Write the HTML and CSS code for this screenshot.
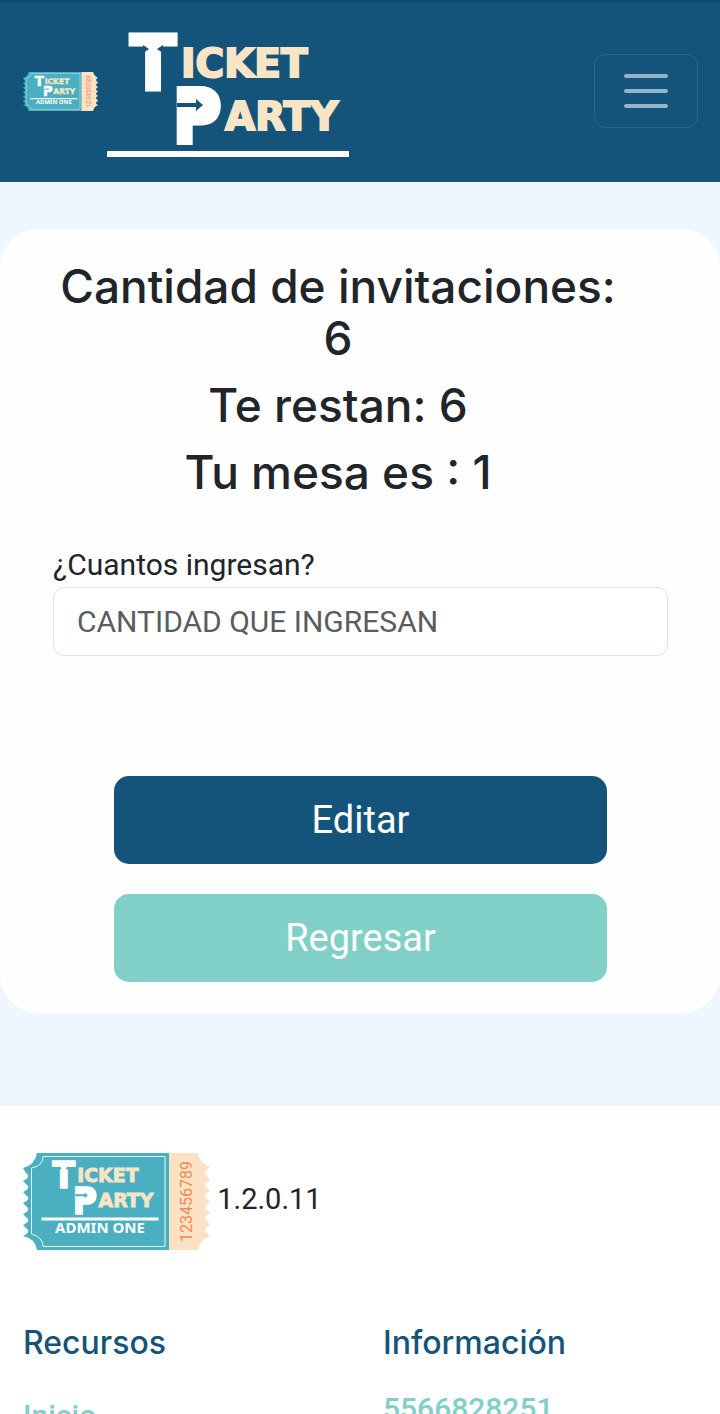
FILE: index.html
```html
<!DOCTYPE html>
<html lang="es">
<head>
<meta charset="utf-8">
<meta name="viewport" content="width=device-width, initial-scale=1">
<title>Ticket Party</title>
<link rel="stylesheet" href="styles.css">
</head>
<body>
<svg class="sprite" aria-hidden="true">
  <symbol id="wordmark" viewBox="0 0 242 126" overflow="visible">
    <g class="logo-big">
      <text x="46" y="58" text-anchor="middle">T</text>
      <text x="65" y="111">P</text>
    </g>
    <path d="M82 62H101V84H82Z" fill="#fff"/>
    <path d="M70 71H89V67L96 73L89 79V75H70ZM36 13L42 17L36 21ZM56 13L50 17L56 21Z" fill="currentColor"/>
    <g class="logo-small">
      <text x="74" y="45">ICKET</text>
      <text x="118" y="98">ARTY</text>
    </g>
    <path d="M0 119H242V125H0Z" fill="#fff"/>
  </symbol>
  <symbol id="ticket" viewBox="0 0 187 97" overflow="visible">
    <path d="M14 0H147V97H14Q12 85 0 83Q9 79 3 75Q1 73 0 72Q9 68 3 64L0 61Q9 57 3 53L0 50Q9 46 3 42L0 39Q9 35 3 31L0 28Q9 24 3 20L0 15Q12 12 14 0Z" fill="#4aafc0"/>
    <path d="M146 0H175Q177 11 187 14Q179 19 184 23L187 27Q179 31 184 35L187 38Q179 42 184 46L187 49Q179 53 184 57L187 60Q179 64 184 68L187 72Q179 76 184 80L187 83Q177 86 175 97H146Z" fill="#fce2c5"/>
    <path d="M20 3.500H142V93.500H20Q20 84 8.500 81V15Q20 13 20 3.500Z" fill="none" stroke="#e8f8fa"/>
    <use href="#wordmark" x="18" y="7" width="118" height="61"/>
    <text class="logo-admin" x="77" y="80" text-anchor="middle">ADMIN ONE</text>
    <text class="logo-number" transform="translate(169 89) rotate(-90)">123456789</text>
  </symbol>
</svg>

<header class="navbar">
  <a class="brand" href="#" aria-label="Ticket Party">
    <svg class="brand-ticket"><use href="#ticket"/></svg>
    <svg class="brand-name" viewBox="0 -8 242 134"><use href="#wordmark" width="242" height="126"/></svg>
  </a>
  <button class="menu-button" type="button" aria-label="Menú">
    <svg class="menu-icon" viewBox="0 0 56 56"><path d="M8 13H48M8 28H48M8 43H48"/></svg>
  </button>
</header>

<main class="main">
  <form class="card">
    <div class="summary">
      <h2>Cantidad de invitaciones: 6</h2>
      <h2>Te restan: 6</h2>
      <h2>Tu mesa es : 1</h2>
    </div>
    <label class="label" for="cantidad">¿Cuantos ingresan?</label>
    <input class="input" id="cantidad" type="text" placeholder="CANTIDAD QUE INGRESAN">
    <div class="actions">
      <button class="btn btn-primary" type="button">Editar</button>
      <button class="btn btn-secondary" type="button">Regresar</button>
    </div>
  </form>
</main>

<footer class="footer">
  <div class="version">
    <svg class="footer-ticket" role="img" aria-label="Ticket Party"><use href="#ticket"/></svg>
    <span>1.2.0.11</span>
  </div>
  <div class="columns">
    <section>
      <h5>Recursos</h5>
      <ul class="links"><li><a href="#">Inicio</a></li></ul>
    </section>
    <section>
      <h5>Información</h5>
      <a class="phone" href="tel:5566828251">5566828251</a>
    </section>
  </div>
</footer>
</body>
</html>
```
FILE: styles.css
```css
* { box-sizing: border-box; }
body {
  margin: 0;
  height: 100vh;
  overflow: hidden;
  background: #fff;
  color: #212529;
  font: 30px/45px Roboto, sans-serif;
}
h2, h5, ul { margin: 0; padding: 0; font-weight: 500; }
a { text-decoration: none; }
.sprite { position: absolute; width: 0; height: 0; }

.logo-big { font: bold 76px "DejaVu Sans Condensed", "DejaVu Sans", sans-serif; fill: #fff; stroke: #fff; stroke-width: 3px; }
.logo-small { font: bold 39px "DejaVu Sans", sans-serif; fill: #f8e5c6; stroke: #f8e5c6; stroke-width: 2px; }
.logo-admin { font: bold 15px "Noto Sans", sans-serif; fill: #fff; }
.logo-number { font: 16px Roboto, sans-serif; fill: #f08a56; }

.navbar {
  display: flex;
  align-items: center;
  justify-content: space-between;
  padding: 22px 22px 24px 23px;
  border-top: 2px solid #0d486c;
  background: #14547a;
}
.brand { display: flex; align-items: center; gap: 9px; }
.brand-ticket { width: 75px; height: 39px; color: #4aafc0; overflow: visible; }
.brand-name { width: 242px; height: 134px; color: #14547a; overflow: visible; }
.menu-button {
  display: flex;
  padding: 8px 23px;
  border: 1px solid #2b658a;
  border-radius: 11px;
  background: transparent;
}
.menu-icon {
  width: 56px;
  height: 56px;
  fill: none;
  stroke: #94b4c6;
  stroke-width: 4;
  stroke-linecap: round;
}

.main { padding: 47px 0 93px; background: #eef7ff; }
.card {
  display: flex;
  flex-direction: column;
  padding: 31px 52px 31px 53px;
  border-radius: 38px;
  background: #fefefe;
}
.summary { padding-right: 45px; margin-bottom: 29px; text-align: center; }
.summary h2 {
  margin-bottom: 15px;
  font: 500 46px/52px Inter, sans-serif;
}
.input {
  width: 100%;
  height: 69px;
  padding: 0 23px;
  border: 1px solid #dee2e6;
  border-radius: 11px;
  background: #fff;
  color: #212529;
  font: inherit;
}
.input::placeholder { color: #5a5c5e; opacity: 1; }
.actions { display: grid; gap: 30px; padding: 120px 61px 0; }
.btn {
  padding: 16px;
  border: 0;
  border-radius: 15px;
  color: #fff;
  font: 38px/56px Roboto, sans-serif;
}
.btn-primary { background: #14547a; }
.btn-secondary { background: #81d0c7; }

.footer { padding: 47px 23px 0; }
.footer-ticket { width: 187px; height: 97px; color: #4aafc0; vertical-align: middle; overflow: visible; }
.version { font-size: 29px; }
.columns { display: grid; grid-template-columns: 1fr 1fr; gap: 46px; padding-top: 75px; }
.columns h5 { color: #14547a; font: 500 32px/36px Inter, sans-serif; }
.links { padding-top: 32px; list-style: none; }
.links a, .phone { color: #81d0c7; font-weight: 500; }
.phone { display: block; padding-top: 25px; }
```
